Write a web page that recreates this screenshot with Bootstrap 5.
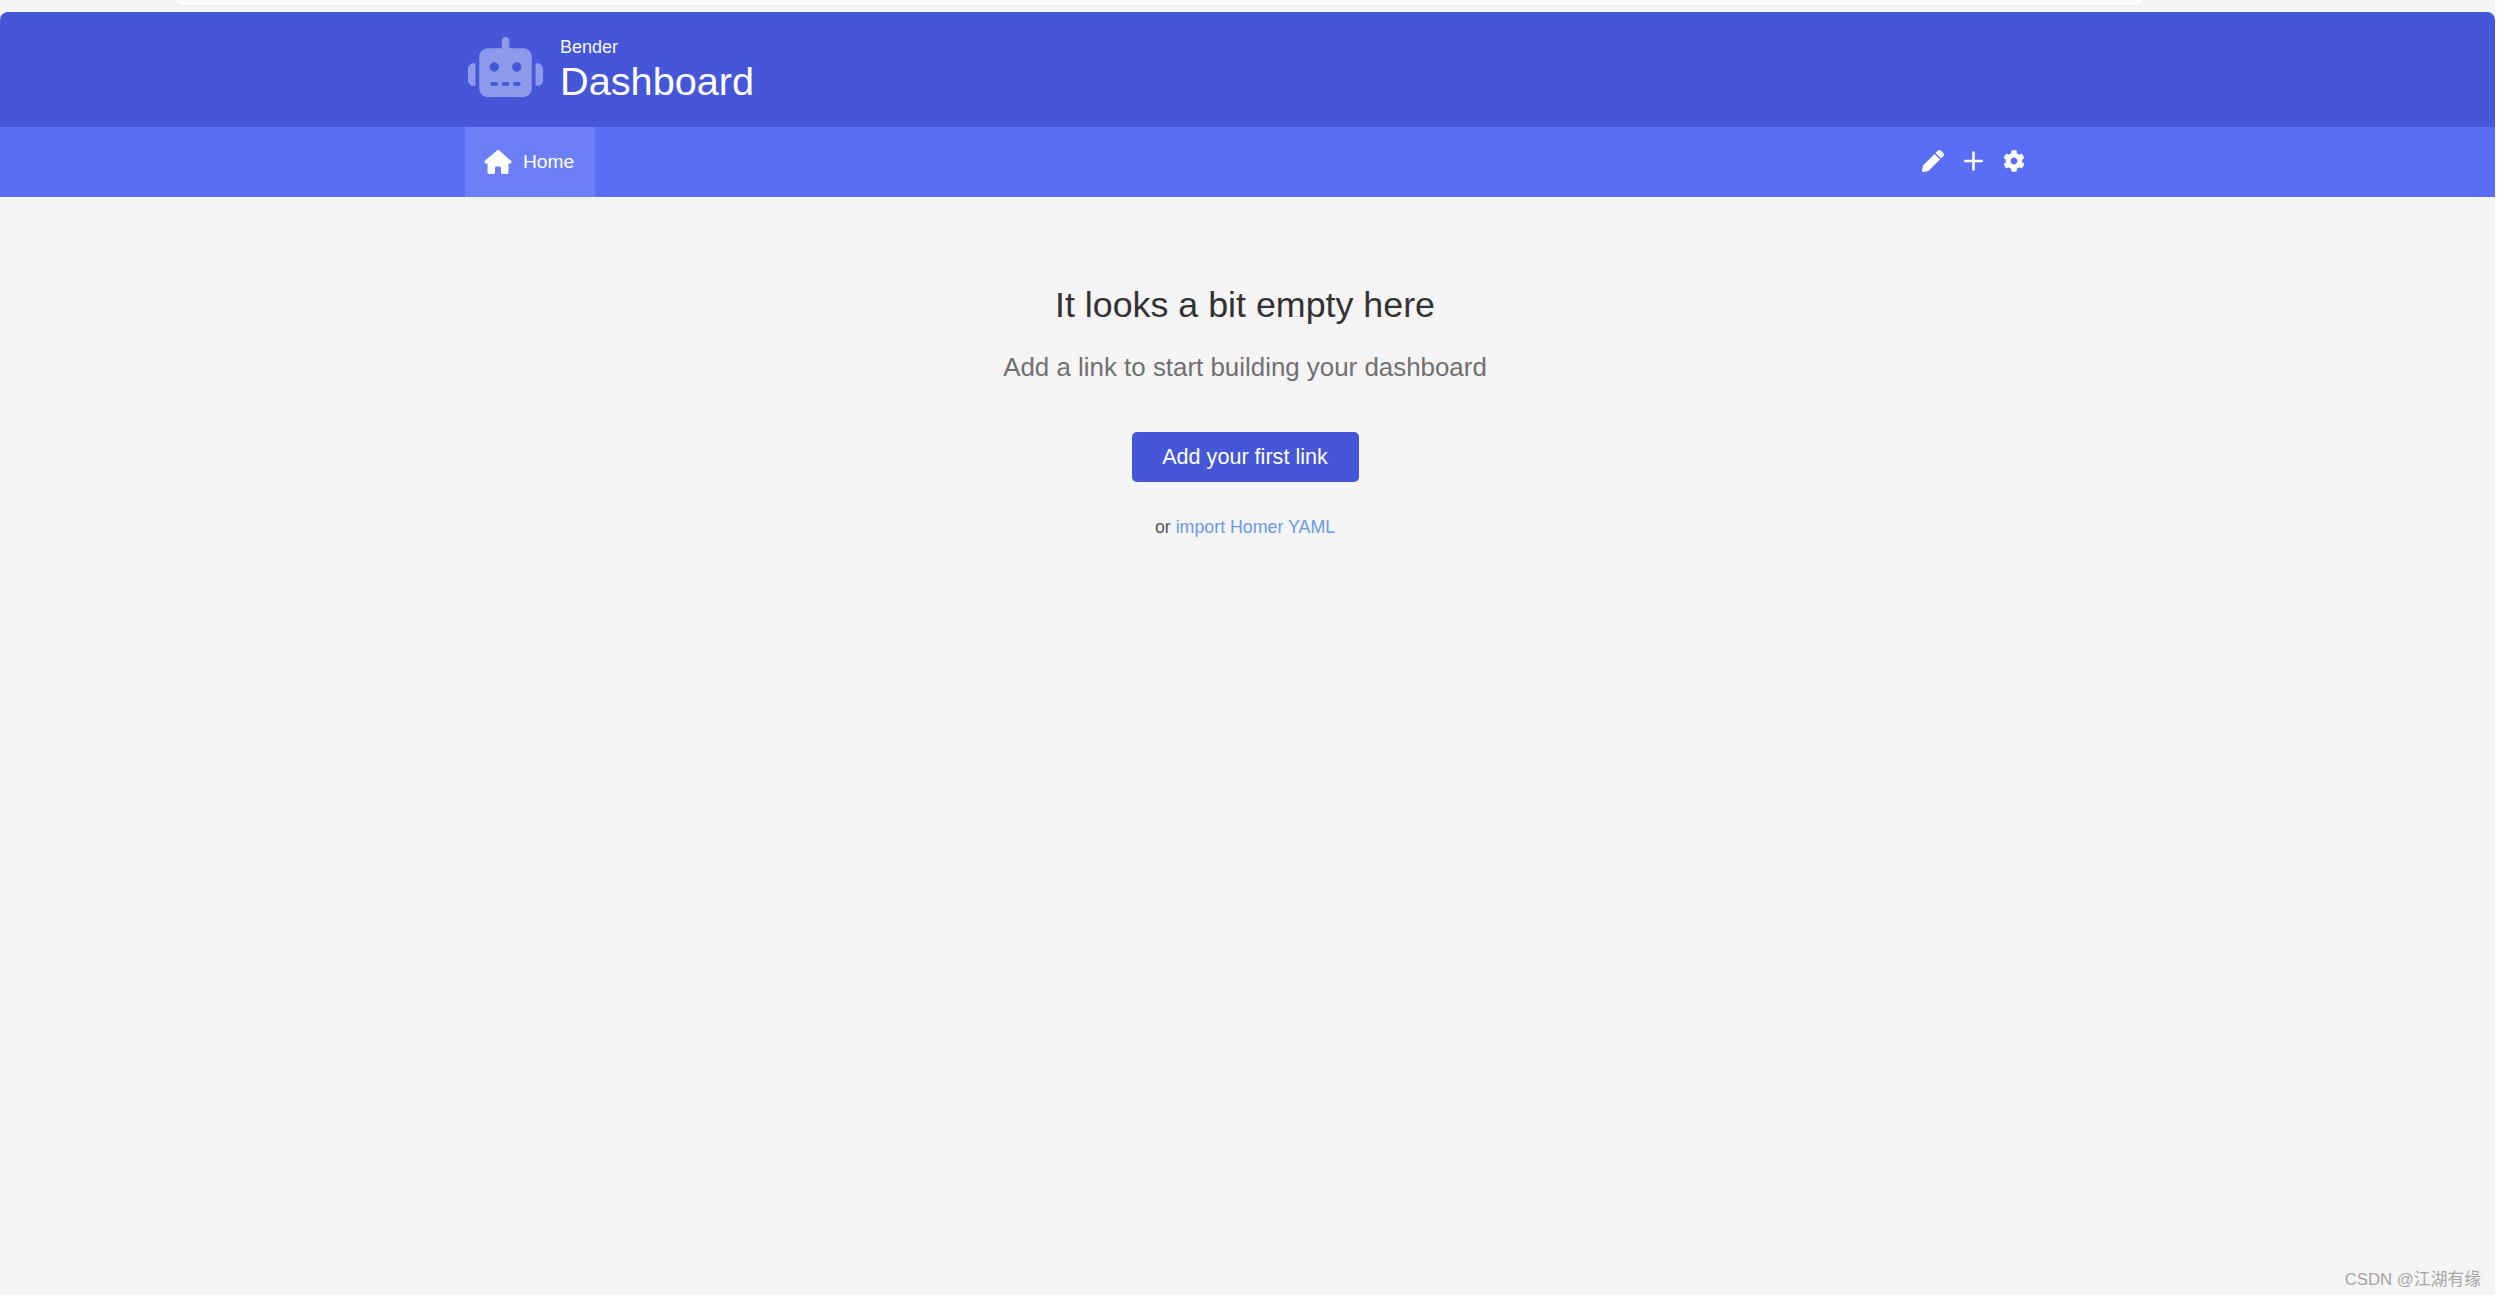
<!doctype html>
<html lang="en">
<head>
<meta charset="utf-8">
<title>Dashboard</title>
<link href="https://cdn.jsdelivr.net/npm/bootstrap@5.3.0/dist/css/bootstrap.min.css" rel="stylesheet">
<style>
html,body{height:100%}
body{background:#fff;font-family:"Liberation Sans",Arial,sans-serif;overflow:hidden}
.frame{width:2495px;height:1295px;background:#f5f5f5;overflow:hidden}
.topgap{height:12px;padding-left:175px;padding-right:351px}
.topgap-tab{height:6px;background:#fff;border:1px solid #efefef;border-top:0;border-radius:0 0 12px 12px}
.brandbar{height:115px;background:#4556d8;border-radius:8px 8px 0 0;padding-left:465px;color:#fff}
.robot{width:75px;height:60px;margin-left:3px;margin-right:17px;margin-top:-5px}
.brand-sub{font-size:18px;line-height:20px;margin-top:1px;opacity:.95}
.brand-title{font-size:39.7px;line-height:46px;margin-top:1px}
.navstrip{height:70px;background:#5a6ef5;padding-left:465px;padding-right:470px;color:#fff}
.home-tab{width:130px;background:#6c7ff6;padding-left:19px;font-size:19.2px;gap:11px}
.ico-home{width:28px;height:24px}
.tools{gap:20px;padding-bottom:2px}
.tools svg{display:block}
.emptybox{padding-right:5px;padding-top:87px;text-align:center;height:1073px}
.empty-title{font-size:35.8px;line-height:42px;color:#333;margin:0;font-weight:400}
.empty-sub{font-size:25.9px;line-height:30px;color:#707070;margin:0;margin-top:26px}
.add-btn{width:227px;height:50px;margin-top:50px;background:#4556d8;border:0;border-radius:5px;color:#fff;font-size:21.6px;padding:0;line-height:48px}
.add-btn:hover{background:#4556d8;color:#fff}
.import-line{font-size:17.8px;line-height:20px;color:#555;margin:0;margin-top:35px}
.import-line a{color:#6b9ae6;text-decoration:none}
.mark-line{padding-right:14px;font-size:16.8px;line-height:20px;color:#a6a6a6;text-align:right;font-family:"Liberation Sans","Noto Sans CJK SC",sans-serif}
</style>
</head>
<body>
<div class="frame">
  <div class="topgap"><div class="topgap-tab"></div></div>
  <header class="brandbar d-flex align-items-center">
    <svg class="robot" viewBox="0 0 640 512" fill="#8d99ea" aria-hidden="true"><path d="M320 0c17.7 0 32 14.3 32 32v64h120c39.8 0 72 32.2 72 72v272c0 39.8-32.2 72-72 72H168c-39.8 0-72-32.2-72-72V168c0-39.8 32.2-72 72-72h120V32c0-17.7 14.3-32 32-32zM208 384c-8.8 0-16 7.2-16 16s7.2 16 16 16h32c8.800 0 16-7.200 16-16s-7.200-16-16-16h-32zm96 0c-8.800 0-16 7.200-16 16s7.200 16 16 16h32c8.800 0 16-7.200 16-16s-7.200-16-16-16h-32zm96 0c-8.800 0-16 7.200-16 16s7.200 16 16 16h32c8.800 0 16-7.200 16-16s-7.200-16-16-16h-32zM264 256a40 40 0 1 0-80 0 40 40 0 1 0 80 0zm152 40a40 40 0 1 0 0-80 40 40 0 1 0 0 80zM48 224h16v192H48c-26.500 0-48-21.500-48-48V272c0-26.500 21.500-48 48-48zm544 0c26.500 0 48 21.500 48 48v96c0 26.500-21.500 48-48 48h-16V224h16z"/></svg>
    <div>
      <div class="brand-sub">Bender</div>
      <div class="brand-title">Dashboard</div>
    </div>
  </header>
  <nav class="navstrip d-flex justify-content-between">
    <a class="home-tab d-flex align-items-center text-white text-decoration-none" href="#">
      <svg class="ico-home" viewBox="0 0 576 512" fill="#fff" aria-hidden="true"><path d="M575.800 255.500c0 18-15 32.100-32 32.100h-32l.7 160.200c0 2.700-.2 5.400-.5 8.100V472c0 22.100-17.900 40-40 40H456c-1.100 0-2.200 0-3.300-.1-1.400.1-2.800.1-4.200.1H416 392c-22.100 0-40-17.900-40-40V448 384c0-17.700-14.300-32-32-32H256c-17.700 0-32 14.300-32 32v64 24c0 22.100-17.900 40-40 40H160 128.100c-1.500 0-3-.1-4.500-.2-1.200.1-2.400.2-3.600.2H104c-22.100 0-40-17.900-40-40V360c0-.9 0-1.900.1-2.800V287.600H32c-18 0-32-14-32-32.100 0-9 3-17 10-24L266.400 8c7-7 15-8 22-8s15 2 21 7L564.800 231.500c8 7 12 15 11 24z"/></svg>
      <span>Home</span>
    </a>
    <div class="tools d-flex align-items-center">
      <svg width="22" height="22" viewBox="0 0 512 512" fill="#fff" aria-hidden="true"><path d="M497.900 142.100l-46.100 46.100c-4.700 4.700-12.300 4.700-17 0l-111-111c-4.700-4.700-4.700-12.300 0-17l46.100-46.100c18.700-18.700 49.100-18.700 67.900 0l60.100 60.100c18.800 18.700 18.800 49.100 0 67.900zM284.200 99.800L21.600 362.400.4 483.900c-2.900 16.400 11.400 30.600 27.800 27.800l121.500-21.300 262.600-262.600c4.700-4.700 4.700-12.300 0-17l-111-111c-4.800-4.700-12.400-4.700-17.100 0z"/></svg>
      <svg width="19" height="24" viewBox="0 0 19 24" fill="none" stroke="#fff" stroke-width="2.600" stroke-linecap="round" aria-hidden="true"><path d="M9.500 3.500v17M1.200 12h16.600"/></svg>
      <svg width="22" height="22" viewBox="0 0 512 512" fill="#fff" aria-hidden="true"><path d="M487.400 315.700l-42.600-24.600c4.300-23.200 4.300-47 0-70.200l42.600-24.600c4.900-2.800 7.100-8.600 5.500-14-11.100-35.600-30-67.800-54.700-94.600-3.800-4.100-10-5.100-14.800-2.300L380.800 110c-17.900-15.400-38.500-27.300-60.800-35.100V25.800c0-5.600-3.900-10.500-9.400-11.700-36.700-8.200-74.300-7.800-109.200 0-5.500 1.200-9.400 6.100-9.400 11.700V75c-22.200 7.900-42.800 19.800-60.800 35.100L88.700 85.500c-4.900-2.800-11-1.900-14.800 2.300-24.700 26.700-43.600 58.900-54.700 94.600-1.700 5.400.6 11.200 5.500 14L67.300 221c-4.300 23.200-4.300 47 0 70.200l-42.600 24.600c-4.900 2.800-7.100 8.600-5.500 14 11.100 35.600 30 67.800 54.700 94.600 3.800 4.100 10 5.100 14.800 2.300l42.600-24.600c17.900 15.400 38.500 27.300 60.800 35.100v49.200c0 5.600 3.900 10.500 9.400 11.700 36.700 8.200 74.300 7.800 109.200 0 5.500-1.200 9.400-6.100 9.400-11.700v-49.200c22.200-7.900 42.800-19.800 60.800-35.100l42.600 24.600c4.900 2.800 11 1.900 14.800-2.300 24.700-26.700 43.600-58.900 54.700-94.600 1.500-5.500-.7-11.300-5.600-14.100zM256 336c-44.100 0-80-35.900-80-80s35.900-80 80-80 80 35.900 80 80-35.900 80-80 80z"/></svg>
    </div>
  </nav>
  <main class="emptybox">
    <h1 class="empty-title">It looks a bit empty here</h1>
    <p class="empty-sub">Add a link to start building your dashboard</p>
    <button type="button" class="btn add-btn">Add your first link</button>
    <p class="import-line">or <a href="#">import Homer YAML</a></p>
  </main>
  <div class="mark-line">CSDN @江湖有缘</div>
</div>
<script src="https://cdn.jsdelivr.net/npm/bootstrap@5.3.0/dist/js/bootstrap.bundle.min.js"></script>
</body>
</html>
